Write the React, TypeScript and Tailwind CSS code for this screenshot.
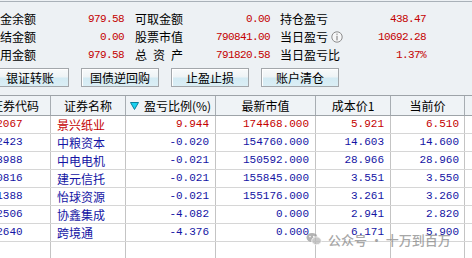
import React from 'react';

// Position rows, visible part of the trading client
const POSITIONS = [
  { code: '002067', name: '景兴纸业', ratio: '9.944', value: '174468.000', cost: '5.921', price: '6.510', up: true },
  { code: '002423', name: '中粮资本', ratio: '-0.020', value: '154760.000', cost: '14.603', price: '14.600', up: false },
  { code: '603988', name: '中电电机', ratio: '-0.021', value: '150592.000', cost: '28.966', price: '28.960', up: false },
  { code: '600816', name: '建元信托', ratio: '-0.021', value: '155845.000', cost: '3.551', price: '3.550', up: false },
  { code: '601388', name: '怡球资源', ratio: '-0.021', value: '155176.000', cost: '3.261', price: '3.260', up: false },
  { code: '002506', name: '协鑫集成', ratio: '-4.082', value: '0.000', cost: '2.941', price: '2.820', up: false },
  { code: '002640', name: '跨境通', ratio: '-4.376', value: '0.000', cost: '6.171', price: '5.900', up: false },
];

const SUMMARY = [
  [
    { label: '资金余额', value: '979.58' },
    { label: '可取金额', value: '0.00' },
    { label: '持仓盈亏', value: '438.47' },
  ],
  [
    { label: '冻结金额', value: '0.00' },
    { label: '股票市值', value: '790841.00' },
    { label: '当日盈亏', value: '10692.28', info: true },
  ],
  [
    { label: '可用金额', value: '979.58' },
    { label: '总资产', value: '791820.58', spaced: true },
    { label: '当日盈亏比', value: '1.37%' },
  ],
];

const BUTTONS = ['银证转账', '国债逆回购', '止盈止损', '账户清仓'];

const GROUP_W = ['w-[136px]', 'w-[135px] ml-[11px]', 'w-[146px] ml-[10px]'];

const InfoIcon = () => (
  <svg width="12" height="12" viewBox="0 0 12 12" className="ml-[3px]">
    <circle cx="6" cy="6" r="5.2" fill="#f6f7f8" stroke="#8c8c8c" strokeWidth="1" />
    <rect x="5.4" y="2.6" width="1.2" height="1.2" fill="#8c8c8c" />
    <rect x="5.4" y="4.8" width="1.2" height="4.6" fill="#8c8c8c" />
  </svg>
);

const SortIcon = () => (
  <svg width="9" height="8" viewBox="0 0 9 8" className="mr-[5px]">
    <polygon points="0.5,0.5 8.5,0.5 4.5,7.5" fill="#19d2f0" stroke="#0a7f9c" strokeWidth="1" />
  </svg>
);

const WeChatMark = () => (
  <svg width="16" height="14" viewBox="0 0 16 14">
    <ellipse cx="6" cy="5.5" rx="5.5" ry="4.6" fill="#9a9a9a" />
    <ellipse cx="10.5" cy="8.8" rx="4.8" ry="4" fill="#b8b8b8" stroke="#ffffff" strokeWidth="0.8" />
    <circle cx="4" cy="4.6" r="0.8" fill="#fff" />
    <circle cx="7.8" cy="4.6" r="0.8" fill="#fff" />
  </svg>
);

const COLS = 'grid grid-cols-[71px_75px_90px_100px_75px_74px_60px]';

export default function App() {
  return (
    <div className="relative h-[258px] w-[472px] overflow-hidden bg-white font-['Noto_Sans_CJK_SC',sans-serif] text-[12px] leading-none text-black">
      <div className="-ml-[20px] w-[520px]">
        {/* Account summary */}
        <div className="bg-[#edf1f4] pt-[1px]">
          <div className="h-[1px] bg-[#a9b1b8]" />
          <div className="flex flex-col pl-[8px] pt-[8px]">
            {SUMMARY.map((row, r) => (
              <div key={r} className="flex h-[18px] items-center">
                {row.map((cell, c) => (
                  <div key={c} className={`flex items-center justify-between ${GROUP_W[c]}`}>
                    {cell.spaced ? (
                      <span className="flex w-[48px] justify-between">
                        <span>总</span>
                        <span>资</span>
                        <span>产</span>
                      </span>
                    ) : (
                      <span className="flex items-center">
                        {cell.label}
                        {cell.info && <InfoIcon />}
                      </span>
                    )}
                    <span className="font-['Liberation_Mono',monospace] text-[11px] tracking-[-0.6px] text-[#c40000]">
                      {cell.value}
                    </span>
                  </div>
                ))}
              </div>
            ))}
          </div>

          <div className="flex gap-[12px] pb-[8px] pl-[11px] pt-[4px]">
            {BUTTONS.map((b) => (
              <button
                key={b}
                className="flex h-[19px] w-[78px] items-center justify-center border border-[#a3a7ab] bg-[linear-gradient(#f8fafb_0%,#eef3f5_48%,#d3eaf3_52%,#dbeef5_100%)] text-[12px] text-black shadow-[inset_1px_1px_0_#ffffff]"
              >
                {b}
              </button>
            ))}
          </div>
        </div>

        {/* Positions table */}
        <div className={`${COLS} h-[21px] border-y border-[#9da3a8] bg-[#eff3f6]`}>
          <div className="flex items-center justify-center border-r border-[#a7adb2]">证券代码</div>
          <div className="flex items-center justify-center border-r border-[#a7adb2]">证券名称</div>
          <div className="flex items-center justify-center border-r border-[#a7adb2]">
            <SortIcon />
            盈亏比例(%)
          </div>
          <div className="flex items-center justify-center border-r border-[#a7adb2]">最新市值</div>
          <div className="flex items-center justify-center border-r border-[#a7adb2]">成本价1</div>
          <div className="flex items-center justify-center border-r border-[#a7adb2]">当前价</div>
          <div />
        </div>

        {[...POSITIONS, null].map((p, i) => {
          const color = p?.up ? 'text-[#c40000]' : 'text-[#1414a4]';
          const num = `font-['Liberation_Mono',monospace] text-[11px] ${color}`;
          return (
            <div key={i} className={`${COLS} h-[18px] border-b border-[#d6d6d6]`}>
              <div className={`flex items-center border-r border-[#c4c4c4] pl-[3px] ${num}`}>{p?.code}</div>
              <div className={`flex items-center border-r border-[#c4c4c4] pl-[6px] ${color}`}>{p?.name}</div>
              <div className={`flex items-center justify-end border-r border-[#c4c4c4] pr-[6px] ${num}`}>{p?.ratio}</div>
              <div className={`flex items-center justify-end border-r border-[#c4c4c4] pr-[6px] ${num}`}>{p?.value}</div>
              <div className={`flex items-center justify-end border-r border-[#c4c4c4] pr-[6px] ${num}`}>{p?.cost}</div>
              <div className={`flex items-center justify-end border-r border-[#c4c4c4] pr-[5px] ${num}`}>{p?.price}</div>
              <div />
            </div>
          );
        })}
      </div>

      {/* Watermark */}
      <div className="pointer-events-none absolute left-[306px] top-[232px] flex items-center gap-[6px] text-[13px] font-medium text-[#8a8a8a] opacity-75">
        <WeChatMark />
        <span>公众号 · 十万到百万</span>
      </div>
    </div>
  );
}
